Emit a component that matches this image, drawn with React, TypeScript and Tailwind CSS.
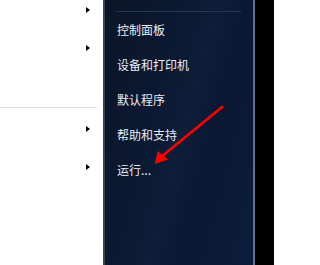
import React from "react";

const Tri = () => (
  <div className="h-0 w-0 border-y-[3.5px] border-l-[4px] border-y-transparent border-l-black" />
);

const items = ["控制面板", "设备和打印机", "默认程序", "帮助和支持", "运行..."];

export default function App() {
  return (
    <div
      className="relative flex h-[265px] w-[274px] overflow-hidden bg-black"
      style={{ fontFamily: '"Noto Sans CJK SC", "Noto Sans", sans-serif' }}
    >
      {/* left white panel */}
      <div className="relative flex w-[103px] flex-col bg-white">
        <div className="flex h-[19px] items-center justify-end pr-[13px]"><Tri /></div>
        <div className="mt-[19px] flex h-[19px] items-center justify-end pr-[13px]"><Tri /></div>
        <div className="mt-[50px] ml-0 h-px w-[97px] bg-[#d8dfe8]" />
        <div className="mt-[11px] flex h-[19px] items-center justify-end pr-[13px]"><Tri /></div>
        <div className="mt-[19px] flex h-[19px] items-center justify-end pr-[13px]"><Tri /></div>
      </div>
      {/* dark panel */}
      <div className="flex w-[152px] border-l-2 border-l-[#3a4252] border-r-2 border-r-[#5d708b] bg-[linear-gradient(105deg,#0a1527_0%,#0b1932_35%,#0e1d38_52%,#0a1833_65%,#0b1c3a_100%)]">
        <div className="flex w-full flex-col pl-[12px] pt-[11px]">
          <div className="h-px w-[124px] bg-[#26354f]" />
          {items.map((t) => (
            <div
              key={t}
              className="flex h-[35px] items-center text-[12px] leading-none text-[#e9edf3]"
            >
              {t}
            </div>
          ))}
        </div>
      </div>
      <div className="flex-1 bg-black" />
      {/* red annotation arrow */}
      <svg className="pointer-events-none absolute left-0 top-0" width="274" height="265">
        <line x1="222" y1="107" x2="161" y2="157" stroke="#ff0000" strokeWidth="2.6" strokeLinecap="round" />
        <polygon points="155,164 157.5,151 168,159.5" fill="#ff0000" />
      </svg>
    </div>
  );
}
